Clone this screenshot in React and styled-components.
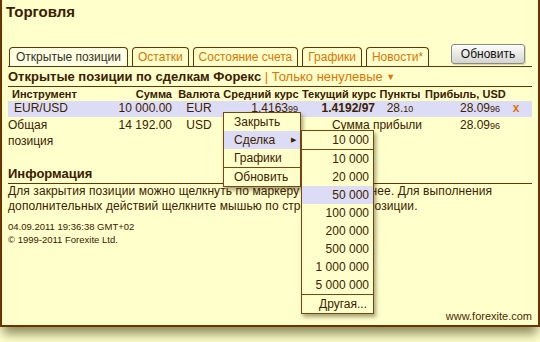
import React from 'react';
import styled, { createGlobalStyle } from 'styled-components';

const Global = createGlobalStyle`
  html, body {
    margin: 0;
    padding: 0;
    background: #ffffcc;
  }
  body {
    font-family: "Liberation Sans", Arial, sans-serif;
    color: #3c2200;
  }
`;

const brown = '#6e3200';
const orange = '#df7400';

const Page = styled.div`
  width: 540px;
  height: 342px;
  overflow: hidden;
  position: relative;
`;

const Panel = styled.div`
  box-sizing: border-box;
  width: 540px;
  height: 327px;
  background: #ffffcc;
  border: 2px solid ${brown};
  border-top: none;
  padding: 3px 6px 0 6px;
  display: flex;
  flex-direction: column;
  box-shadow: 0 10px 10px -3px rgba(80, 80, 40, 0.65);
`;

const Title = styled.h1`
  margin: 0 0 0 -2px;
  font-size: 15px;
  line-height: 18px;
  font-weight: bold;
  color: #3a2000;
`;

const TabBar = styled.div`
  margin-top: 23px;
  height: 22px;
  display: flex;
  align-items: flex-end;
  gap: 4px;
  border-bottom: 1px solid ${brown};
  padding-left: 1px;
`;

const Tab = styled.div`
  box-sizing: border-box;
  height: 19px;
  padding: 0 ${p => (p.$active ? 6 : 5)}px;
  border: 1px solid ${brown};
  border-bottom: none;
  border-radius: 4px 4px 0 0;
  font-size: 12px;
  line-height: 19px;
  color: ${p => (p.$active ? '#3a3020' : orange)};
  background: ${p => (p.$active ? '#ffffe6' : '#ffffcc')};
  white-space: nowrap;
`;

const Spacer = styled.div`
  flex: 1;
`;

const Button = styled.button`
  align-self: flex-start;
  box-sizing: border-box;
  height: 20px;
  width: 74px;
  margin-right: 7px;
  padding: 0;
  font-family: "Liberation Sans", Arial, sans-serif;
  font-size: 12px;
  color: #111;
  border: 1px solid #8a8a80;
  border-radius: 3px;
  background: linear-gradient(#fdfdfd, #e4e4e0 60%, #d4d4d0);
  box-shadow: 1px 1px 0 rgba(0, 0, 0, 0.15);
`;

const SectionTitle = styled.div`
  height: 19px;
  line-height: 19px;
  font-size: 13px;
  font-weight: bold;
  color: #3a2000;
  border-bottom: 1px solid ${brown};
  white-space: nowrap;
`;

const Filter = styled.span`
  color: ${orange};
  font-weight: normal;
`;

const Caret = styled.span`
  font-size: 9px;
  vertical-align: 1px;
`;

const Grid = styled.div`
  display: grid;
  grid-template-columns: 92px 76px 46px 78px 78px 44px 78px 1fr;
`;

const Row = styled.div`
  display: contents;
  & > div {
    background: ${p => (p.$selected ? '#dcdcf6' : 'transparent')};
  }
`;

const Head = styled.div`
  font-size: 11px;
  font-weight: bold;
  line-height: 14px;
  color: #3a2000;
  text-align: ${p => p.$align || 'center'};
  padding: 0 ${p => p.$pr ?? 0}px 0 ${p => p.$pl ?? 0}px;
  white-space: nowrap;
`;

const Cell = styled.div`
  font-size: 12px;
  line-height: ${p => p.$lh || 15}px;
  color: #3c2200;
  font-weight: ${p => (p.$bold ? 'bold' : 'normal')};
  text-align: ${p => p.$align || 'center'};
  padding: 0 ${p => p.$pr ?? 0}px 0 ${p => p.$pl ?? 0}px;
  white-space: nowrap;
  grid-column: ${p => p.$span || 'auto'};
`;

const Pip = styled.span`
  font-size: 9px;
`;

const Close = styled.span`
  color: ${orange};
  font-weight: bold;
`;

const InfoTitle = styled.div`
  margin-top: 16px;
  height: 18px;
  line-height: 18px;
  font-size: 13px;
  font-weight: bold;
  color: #3a2000;
  border-bottom: 1px solid ${brown};
`;

const InfoText = styled.p`
  margin: 0;
  font-size: 12px;
  line-height: 15px;
  letter-spacing: 0.1px;
  color: #3c2200;
`;

const Meta = styled.div`
  margin-top: 6px;
  font-size: 9.5px;
  line-height: 13px;
  color: #3c2200;
`;

const Site = styled.div`
  margin-top: auto;
  margin-bottom: 2px;
  text-align: right;
  font-size: 11px;
  line-height: 14px;
  color: #4a2a00;
`;

const Menu = styled.div`
  position: absolute;
  left: ${p => p.$x}px;
  top: ${p => p.$y}px;
  width: ${p => p.$w}px;
  box-sizing: border-box;
  background: #ffffcc;
  border: 1px solid #7a4510;
  box-shadow: 2px 3px 4px rgba(60, 50, 20, 0.45);
`;

const Item = styled.div`
  height: 18px;
  line-height: 18px;
  font-size: 12px;
  color: #3c2200;
  padding: 0 ${p => p.$pr ?? 4}px 0 ${p => p.$pl ?? 10}px;
  background: ${p => (p.$hot ? '#dcdcf6' : 'transparent')};
  display: flex;
  align-items: center;
  justify-content: ${p => (p.$right ? 'flex-end' : 'space-between')};
  white-space: nowrap;
`;

const Arrow = styled.span`
  font-size: 7px;
  color: #3c2200;
`;

const Sep = styled.div`
  height: 1px;
  background: #7a4510;
`;

const amounts = ['10 000', '20 000', '50 000', '100 000', '200 000', '500 000', '1 000 000', '5 000 000'];

export default function App() {
  return (
    <Page>
      <Global />
      <Panel>
        <Title>Торговля</Title>
        <TabBar>
          <Tab $active>Открытые позиции</Tab>
          <Tab>Остатки</Tab>
          <Tab>Состояние счета</Tab>
          <Tab>Графики</Tab>
          <Tab>Новости*</Tab>
          <Spacer />
          <Button>Обновить</Button>
        </TabBar>
        <SectionTitle>
          Открытые позиции по сделкам Форекс <Filter>| Только ненулевые <Caret>▼</Caret></Filter>
        </SectionTitle>
        <Grid>
          <Head $align="left" $pl={4}>Инструмент</Head>
          <Head $align="right" $pr={4}>Сумма</Head>
          <Head>Валюта</Head>
          <Head>Средний курс</Head>
          <Head>Текущий курс</Head>
          <Head>Пункты</Head>
          <Head $align="left" $pl={3}>Прибыль, USD</Head>
          <Head />

          <Row $selected>
            <Cell $align="left" $pl={6}>EUR/USD</Cell>
            <Cell $align="right" $pr={4}>10 000.00</Cell>
            <Cell>EUR</Cell>
            <Cell $align="right" $pr={2}>1.4163<Pip>99</Pip></Cell>
            <Cell $align="right" $pr={3} $bold>1.4192/97</Cell>
            <Cell>28.<Pip>10</Pip></Cell>
            <Cell $align="right">28.09<Pip>96</Pip></Cell>
            <Cell><Close>x</Close></Cell>
          </Row>

          <Row>
            <Cell $align="left" $lh={16}>Общая<br />позиция</Cell>
            <Cell $align="right" $pr={4} $lh={16}>14 192.00</Cell>
            <Cell $lh={16}>USD</Cell>
            <Cell $lh={16} />
            <Cell $span="span 2" $align="right" $lh={16}>Сумма прибыли</Cell>
            <Cell $align="right" $lh={16}>28.09<Pip>96</Pip></Cell>
            <Cell $lh={16} />
          </Row>
        </Grid>

        <InfoTitle>Информация</InfoTitle>
        <InfoText>
          Для закрытия позиции можно щелкнуть по маркеру x справа от нее. Для выполнения
          <br />
          дополнительных действий щелкните мышью по строке нужной позиции.
        </InfoText>
        <Meta>
          04.09.2011 19:36:38 GMT+02
          <br />
          © 1999-2011 Forexite Ltd.
        </Meta>
        <Site>www.forexite.com</Site>
      </Panel>

      <Menu $x={223} $y={112} $w={78}>
        <Item>Закрыть</Item>
        <Item $hot>Сделка <Arrow>▶</Arrow></Item>
        <Item>Графики</Item>
        <Sep />
        <Item>Обновить</Item>
      </Menu>

      <Menu $x={301} $y={130} $w={73}>
        <Item $right>10 000</Item>
        <Sep />
        {amounts.map(a => (
          <Item key={a} $right $hot={a === '50 000'}>{a}</Item>
        ))}
        <Sep />
        <Item $right $pr={6}>Другая...</Item>
      </Menu>
    </Page>
  );
}
